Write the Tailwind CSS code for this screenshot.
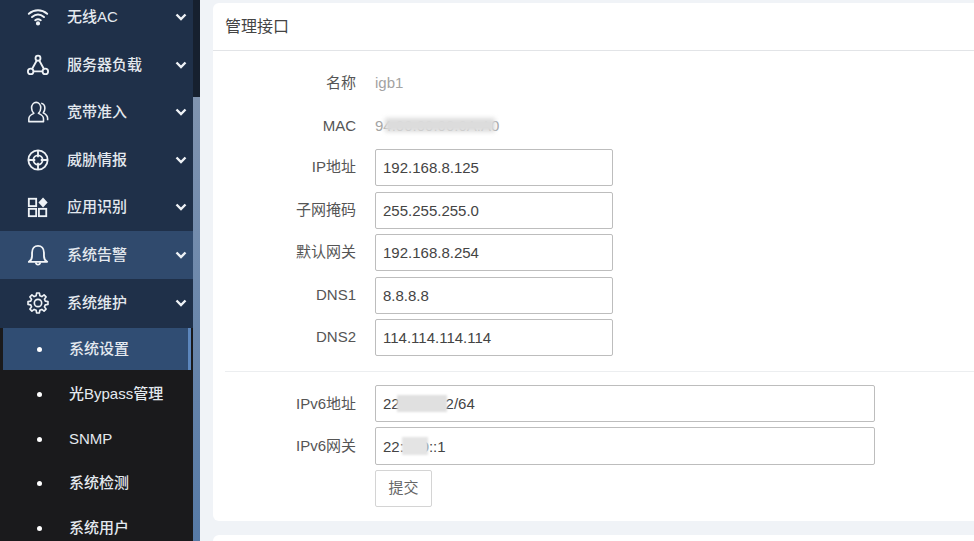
<!DOCTYPE html>
<html lang="zh-CN">
<head>
    <meta charset="UTF-8" />
    <title>管理接口</title>
    <script src="https://cdn.jsdelivr.net/npm/@tailwindcss/browser@4"></script>
</head>
<body class="h-[541px] overflow-hidden bg-[#f0f3f7] font-['Liberation_Sans','Noto_Sans_CJK_SC',sans-serif] antialiased">
    <div class="flex h-[541px] overflow-hidden">
        <!-- sidebar -->
        <aside class="w-[193px] h-[541px] shrink-0 overflow-hidden bg-[#1f3049] text-[15px] font-medium text-[#e4e9ef]">
            <div class="-mt-[6.5px]">
                <div class="h-[47.5px] flex items-center">
                    <svg class="w-[22px] h-[22px] ml-[27px] shrink-0" viewBox="0 0 24 24" fill="none" stroke="#eef2f6" stroke-width="2.2" stroke-linecap="round"><path d="M2 8.500c6-5 14-5 20 0"/><path d="M5.500 12c4-3.300 9-3.300 13 0"/><path d="M9 15.500c2-1.400 4-1.400 6 0"/><circle cx="12" cy="19" r="1.200" fill="#eef2f6"/></svg>
                    <span class="ml-[18px] flex-1">无线AC</span>
                    <svg class="w-3 h-3 mr-[6px]" viewBox="0 0 12 12" fill="none" stroke="#eef2f6" stroke-width="2.4"><path d="M1.500 3.500 6 8l4.500-4.500"/></svg>
                </div>
                <div class="h-[47.5px] flex items-center">
                    <svg class="w-[22px] h-[22px] ml-[27px] shrink-0" viewBox="0 0 24 24" fill="none" stroke="#eef2f6" stroke-width="2"><circle cx="12" cy="4.500" r="2.700"/><circle cx="4" cy="19" r="3"/><circle cx="20" cy="19" r="3"/><path d="M10.800 6.800 5.500 16.400M13.200 6.800l5.300 9.600M7 19h10"/></svg>
                    <span class="ml-[18px] flex-1">服务器负载</span>
                    <svg class="w-3 h-3 mr-[6px]" viewBox="0 0 12 12" fill="none" stroke="#eef2f6" stroke-width="2.4"><path d="M1.500 3.500 6 8l4.500-4.500"/></svg>
                </div>
                <div class="h-[47.5px] flex items-center">
                    <svg class="w-[22px] h-[22px] ml-[27px] shrink-0" viewBox="0 0 24 24" fill="none" stroke="#eef2f6" stroke-width="1.700" stroke-linejoin="round"><path d="M2 22.500v-3c0-3 3-5 5.500-6-1.500-1.500-2.500-3.500-2.500-6C5 4 7.300 1.500 10 1.500s5 2.500 5 6c0 2.500-1 4.500-2.500 6 2.500 1 5.500 3 5.500 6v3z"/><path d="M15.500 2.500c2.500.5 4 2.700 4 5.500 0 2-.7 3.700-1.800 5 2.500 1.200 4.800 3 4.800 6v2"/></svg>
                    <span class="ml-[18px] flex-1">宽带准入</span>
                    <svg class="w-3 h-3 mr-[6px]" viewBox="0 0 12 12" fill="none" stroke="#eef2f6" stroke-width="2.4"><path d="M1.500 3.500 6 8l4.500-4.500"/></svg>
                </div>
                <div class="h-[47.5px] flex items-center">
                    <svg class="w-[22px] h-[22px] ml-[27px] shrink-0" viewBox="0 0 24 24" fill="none" stroke="#eef2f6" stroke-width="2"><circle cx="12" cy="12" r="10.500"/><circle cx="12" cy="12" r="5"/><path d="M12 1.500V9M12 15v7.500M1.500 12H9M15 12h7.500"/></svg>
                    <span class="ml-[18px] flex-1">威胁情报</span>
                    <svg class="w-3 h-3 mr-[6px]" viewBox="0 0 12 12" fill="none" stroke="#eef2f6" stroke-width="2.4"><path d="M1.500 3.500 6 8l4.500-4.500"/></svg>
                </div>
                <div class="h-[47.5px] flex items-center">
                    <svg class="w-[22px] h-[22px] ml-[27px] shrink-0" viewBox="0 0 24 24" fill="none" stroke="#eef2f6" stroke-width="2"><rect x="2" y="3" width="8" height="8"/><rect x="2" y="14" width="8" height="8"/><rect x="13" y="14" width="8" height="8"/><path d="M17.500 1.500 22.500 7l-5 5.500L12.500 7z" fill="#eef2f6" stroke="none"/></svg>
                    <span class="ml-[18px] flex-1">应用识别</span>
                    <svg class="w-3 h-3 mr-[6px]" viewBox="0 0 12 12" fill="none" stroke="#eef2f6" stroke-width="2.4"><path d="M1.500 3.500 6 8l4.500-4.500"/></svg>
                </div>
                <div class="h-[47.5px] flex items-center bg-[#304a6d]">
                    <svg class="w-[22px] h-[22px] ml-[27px] shrink-0" viewBox="0 0 24 24" fill="none" stroke="#f2f5f8" stroke-width="2" stroke-linejoin="round"><path d="M2 19.500c2.500-1.500 3.500-3 3.500-6.500V9.500C5.500 5 8.300 2 12 2s6.500 3 6.500 7.500V13c0 3.500 1 5 3.500 6.500z"/><path d="M9.500 20c.3 1.600 1.200 2.500 2.500 2.500s2.200-.9 2.500-2.500"/></svg>
                    <span class="ml-[18px] flex-1">系统告警</span>
                    <svg class="w-3 h-3 mr-[6px]" viewBox="0 0 12 12" fill="none" stroke="#eef2f6" stroke-width="2.4"><path d="M1.500 3.500 6 8l4.500-4.500"/></svg>
                </div>
                <div class="h-[49.5px] flex items-center">
                    <svg class="w-[22px] h-[22px] ml-[27px] shrink-0" viewBox="0 0 24 24" fill="none" stroke="#eef2f6" stroke-width="1.800" stroke-linejoin="round"><circle cx="12" cy="12" r="4"/><path d="M10.020 4.040 10.470 1.110H13.530L13.980 4.040 16.220 4.970 18.620 3.210 20.790 5.380 19.030 7.780 19.960 10.020 22.890 10.470V13.530L19.960 13.980 19.030 16.220 20.790 18.620 18.620 20.790 16.220 19.030 13.980 19.960 13.530 22.890H10.470L10.020 19.960 7.780 19.030 5.380 20.790 3.210 18.620 4.970 16.220 4.040 13.980 1.110 13.530V10.470L4.040 10.020 4.970 7.780 3.210 5.380 5.380 3.210 7.780 4.970Z"/></svg>
                    <span class="ml-[18px] flex-1">系统维护</span>
                    <svg class="w-3 h-3 mr-[6px]" viewBox="0 0 12 12" fill="none" stroke="#eef2f6" stroke-width="2.4"><path d="M1.500 3.500 6 8l4.500-4.500"/></svg>
                </div>
                <ul class="bg-[#1a1a1c] pb-4">
                    <li class="h-[42px] ml-[3px] mr-[2px] flex items-center bg-[#304d73] border-r-[3px] border-[#5b86bd]">
                        <span class="w-[5px] h-[5px] ml-[34px] rounded-full bg-white"></span>
                        <span class="ml-[27px]">系统设置</span>
                    </li>
                    <li class="h-[47px] pt-[2px] flex items-center">
                        <span class="w-[5px] h-[5px] ml-[37px] rounded-full bg-white"></span>
                        <span class="ml-[27px]">光Bypass管理</span>
                    </li>
                    <li class="h-[44px] flex items-center">
                        <span class="w-[5px] h-[5px] ml-[37px] rounded-full bg-white"></span>
                        <span class="ml-[27px]">SNMP</span>
                    </li>
                    <li class="h-[45px] flex items-center">
                        <span class="w-[5px] h-[5px] ml-[37px] rounded-full bg-white"></span>
                        <span class="ml-[27px]">系统检测</span>
                    </li>
                    <li class="h-[45px] flex items-center">
                        <span class="w-[5px] h-[5px] ml-[37px] rounded-full bg-white"></span>
                        <span class="ml-[27px]">系统用户</span>
                    </li>
                </ul>
            </div>
        </aside>

        <!-- scrollbar -->
        <div class="w-[7px] h-[541px] shrink-0 flex flex-col">
            <div class="h-[97px] bg-[#16202f]"></div>
            <div class="flex-1 bg-gradient-to-b from-[#8094b0] to-[#567aa6]"></div>
        </div>

        <!-- main -->
        <main class="flex-1 min-w-0 pl-[13px] pt-[3px]">
            <section class="w-[780px] h-[518px] bg-white rounded-l-[6px] text-[15px] text-[#555]">
                <h2 class="h-[48px] border-b border-[#e2e4e7] pl-3 flex items-center text-base text-[#444]">管理接口</h2>
                <div class="pt-[11px] pl-3">
                    <div class="h-[42px] flex items-center gap-[19px]">
                        <label class="w-[131px] text-right">名称</label>
                        <span class="text-[#a3a3a3]">igb1</span>
                    </div>
                    <div class="h-[44px] mb-[1px] flex items-center gap-[19px]">
                        <label class="w-[131px] text-right">MAC</label>
                        <span class="relative text-[#a3a3a3]">94:00:00:00:0A:A0
                            <span class="absolute left-[10px] top-[3px] w-[110px] h-[14px] bg-[#dcdcdc] blur-[2px]"></span>
                        </span>
                    </div>
                    <div class="flex flex-col gap-[5.5px] pb-[15px] border-b border-[#eceef0]">
                        <div class="flex items-center gap-[19px]">
                            <label class="w-[131px] text-right">IP地址</label>
                            <input class="w-[238px] h-[37px] px-[7px] border border-[#bdbdbd] rounded-[2px] text-[#444] bg-white" value="192.168.8.125" />
                        </div>
                        <div class="flex items-center gap-[19px]">
                            <label class="w-[131px] text-right">子网掩码</label>
                            <input class="w-[238px] h-[37px] px-[7px] border border-[#bdbdbd] rounded-[2px] text-[#444] bg-white" value="255.255.255.0" />
                        </div>
                        <div class="flex items-center gap-[19px]">
                            <label class="w-[131px] text-right">默认网关</label>
                            <input class="w-[238px] h-[37px] px-[7px] border border-[#bdbdbd] rounded-[2px] text-[#444] bg-white" value="192.168.8.254" />
                        </div>
                        <div class="flex items-center gap-[19px]">
                            <label class="w-[131px] text-right">DNS1</label>
                            <input class="w-[238px] h-[37px] px-[7px] border border-[#bdbdbd] rounded-[2px] text-[#444] bg-white" value="8.8.8.8" />
                        </div>
                        <div class="flex items-center gap-[19px]">
                            <label class="w-[131px] text-right">DNS2</label>
                            <input class="w-[238px] h-[37px] px-[7px] border border-[#bdbdbd] rounded-[2px] text-[#444] bg-white" value="114.114.114.114" />
                        </div>
                    </div>
                    <div class="pt-[13px] flex flex-col gap-[5px]">
                        <div class="flex items-center gap-[19px]">
                            <label class="w-[131px] text-right pt-[2px]">IPv6地址</label>
                            <div class="relative">
                                <input class="w-[500px] h-[37px] px-[7px] border border-[#bdbdbd] rounded-[2px] text-[#444] bg-white" value="22::0000:2/64" />
                                <span class="absolute left-[22px] top-[10px] w-[50px] h-[17px] bg-[#e0e0e0] blur-[1px]"></span>
                            </div>
                        </div>
                        <div class="flex items-center gap-[19px]">
                            <label class="w-[131px] text-right">IPv6网关</label>
                            <div class="relative">
                                <input class="w-[500px] h-[38px] px-[7px] border border-[#bdbdbd] rounded-[2px] text-[#444] bg-white" value="22:000::1" />
                                <span class="absolute left-[27px] top-[10px] w-[26px] h-[18px] bg-[#e4e4e4] blur-[1px]"></span>
                            </div>
                        </div>
                        <div class="pl-[150px]">
                            <button class="w-[57px] h-[37px] border border-[#d4d4d4] rounded-[2px] text-[#666] bg-white">提交</button>
                        </div>
                    </div>
                </div>
            </section>
            <section class="w-[780px] h-[30px] mt-[14px] bg-white rounded-l-[6px]"></section>
        </main>
    </div>
</body>
</html>
